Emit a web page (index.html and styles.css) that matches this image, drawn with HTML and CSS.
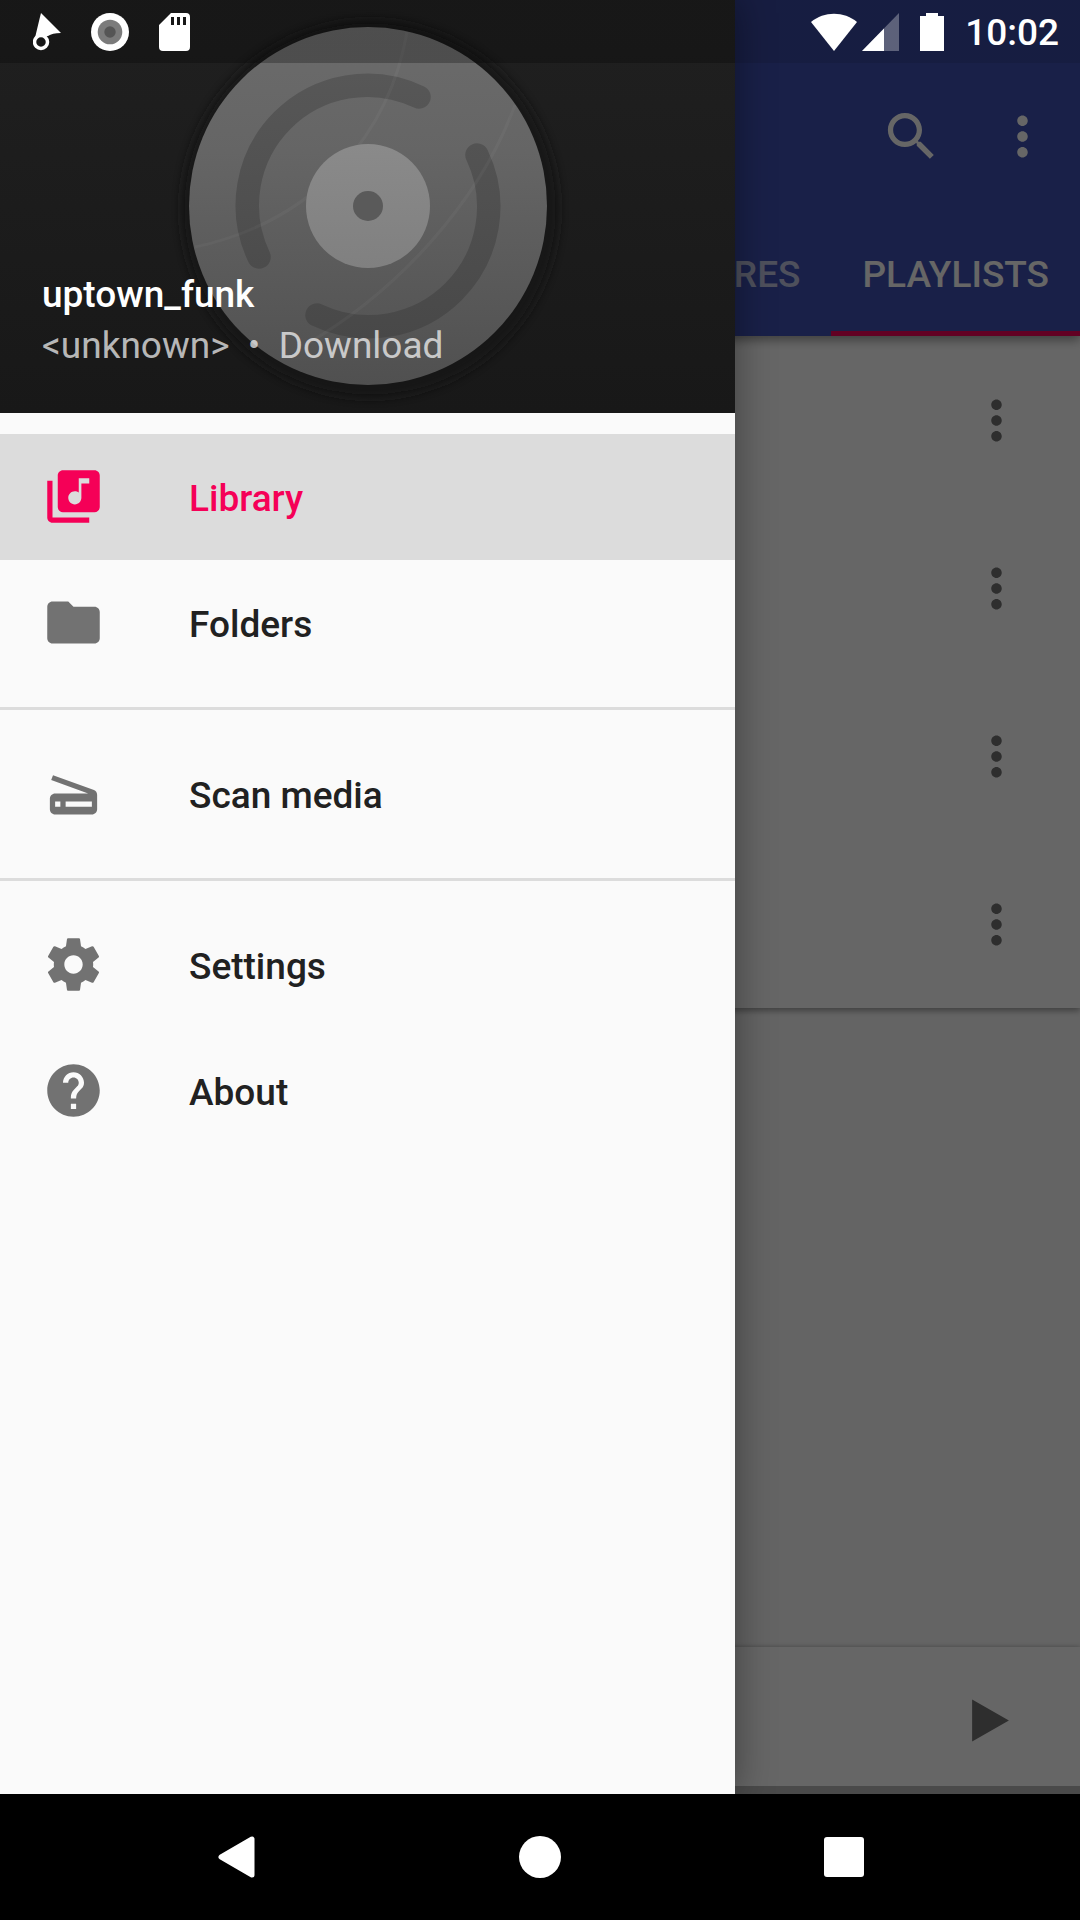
FILE: index.html
```html
<!DOCTYPE html>
<html lang="en">
<head>
<meta charset="utf-8">
<meta name="viewport" content="width=device-width, initial-scale=1">
<title>Music library</title>
<link rel="stylesheet" href="styles.css">
</head>
<body>
<svg width="0" height="0" hidden>
  <symbol id="more" viewBox="0 0 24 24"><path d="M12 8c1.100 0 2-.9 2-2s-.9-2-2-2-2 .9-2 2 .9 2 2 2zm0 2c-1.100 0-2 .9-2 2s.9 2 2 2 2-.9 2-2-.9-2-2-2zm0 6c-1.100 0-2 .9-2 2s.9 2 2 2 2-.9 2-2-.9-2-2-2z"/></symbol>
</svg>
<div class="screen">
  <div class="app">
    <header class="app-bar">
      <div class="toolbar">
        <button class="icon-button" aria-label="Search"><svg class="icon" viewBox="0 0 24 24"><path d="M15.500 14h-.790l-.280-.270C15.410 12.590 16 11.110 16 9.500 16 5.910 13.090 3 9.500 3S3 5.910 3 9.500 5.910 16 9.500 16c1.610 0 3.090-.590 4.230-1.570l.270.280v.790l5 4.990L20.490 19l-4.990-5zm-6 0C7.010 14 5 11.990 5 9.500S7.010 5 9.500 5 14 7.010 14 9.500 11.990 14 9.500 14z"/></svg></button>
        <button class="icon-button" aria-label="More options"><svg class="icon"><use href="#more"/></svg></button>
      </div>
      <nav class="tabs">
        <button class="tab">GENRES</button>
        <button class="tab tab-active">PLAYLISTS</button>
      </nav>
    </header>
    <ul class="playlists">
      <li class="playlist"><button class="icon-button" aria-label="Playlist options"><svg class="icon"><use href="#more"/></svg></button></li>
      <li class="playlist"><button class="icon-button" aria-label="Playlist options"><svg class="icon"><use href="#more"/></svg></button></li>
      <li class="playlist"><button class="icon-button" aria-label="Playlist options"><svg class="icon"><use href="#more"/></svg></button></li>
      <li class="playlist"><button class="icon-button" aria-label="Playlist options"><svg class="icon"><use href="#more"/></svg></button></li>
    </ul>
    <footer class="player">
      <button class="icon-button" aria-label="Play"><svg class="icon" viewBox="0 0 24 24"><path d="M5 4v16l14-8z"/></svg></button>
    </footer>
  </div>
  <div class="scrim"></div>

  <aside class="drawer">
    <header class="now-playing">
      <svg class="cover" viewBox="0 0 735 413" preserveAspectRatio="xMidYMid slice" aria-hidden="true">
        <defs>
          <linearGradient id="back" x1="0" y1="0" x2="0" y2="1"><stop offset="0" stop-color="#202020"/><stop offset="1" stop-color="#181818"/></linearGradient>
          <linearGradient id="disc" x1="0" y1="0" x2="0" y2="1"><stop offset="0" stop-color="#6b6b6b"/><stop offset=".35" stop-color="#656565"/><stop offset="1" stop-color="#505050"/></linearGradient>
          <linearGradient id="label" x1="0" y1="0" x2="0" y2="1"><stop offset="0" stop-color="#8a8a8a"/><stop offset="1" stop-color="#808080"/></linearGradient>
          <linearGradient id="groove" gradientUnits="userSpaceOnUse" x1="0" y1="74" x2="0" y2="338"><stop offset="0" stop-color="#575757"/><stop offset="1" stop-color="#484848"/></linearGradient>
          <filter id="soft" x="-20%" y="-20%" width="140%" height="140%"><feGaussianBlur stdDeviation="5"/></filter>
        </defs>
        <rect width="735" height="413" fill="url(#back)"/>
        <circle cx="370" cy="209" r="189" fill="#131313" opacity=".8" filter="url(#soft)"/>
        <circle cx="368" cy="206" r="179" fill="url(#disc)"/>
        <g fill="none" stroke="url(#groove)" stroke-width="23.500" stroke-linecap="round">
          <path d="M419 97A120 120 0 0 0 259 257"/>
          <path d="M477 155A120 120 0 0 1 317 315"/>
        </g>
        <g fill="none" stroke="#fff" stroke-width="3" opacity=".03">
          <path d="M407 32C390 130 320 220 195 247"/>
          <path d="M515 105C480 200 400 290 305 345"/>
        </g>
        <circle cx="368" cy="206" r="62" fill="url(#label)"/>
        <circle cx="368" cy="206" r="15" fill="#5a5a5a"/>
      </svg>
      <div class="track">
        <p class="track-title">uptown_funk</p>
        <p class="track-info">&lt;unknown&gt;&nbsp; • &nbsp;Download</p>
      </div>
    </header>
    <nav class="menu">
      <div class="menu-group">
        <a class="menu-item menu-item-current" href="#library"><svg class="icon" viewBox="0 0 24 24"><path d="M20 2H8c-1.100 0-2 .9-2 2v12c0 1.100.9 2 2 2h12c1.100 0 2-.9 2-2V4c0-1.100-.9-2-2-2zm-2 5h-3v5.500c0 1.380-1.120 2.500-2.500 2.500S10 13.880 10 12.500s1.120-2.500 2.500-2.500c.570 0 1.080.190 1.500.510V5h4v2zM4 6H2v14c0 1.100.9 2 2 2h14v-2H4V6z"/></svg><span>Library</span></a>
        <a class="menu-item" href="#folders"><svg class="icon" viewBox="0 0 24 24"><path d="M10 4H4c-1.100 0-1.990.9-1.990 2L2 18c0 1.100.9 2 2 2h16c1.100 0 2-.9 2-2V8c0-1.100-.9-2-2-2h-8l-2-2z"/></svg><span>Folders</span></a>
      </div>
      <div class="menu-group">
        <a class="menu-item" href="#scan"><svg class="icon" viewBox="0 0 24 24"><path fill-rule="evenodd" d="M19.800 10.700L4.200 5l-.7 1.900L17.600 12H5c-1.100 0-2 .9-2 2v4c0 1.100.9 2 2 2h14c1.100 0 2-.9 2-2v-5.500c0-.8-.5-1.600-1.200-1.800zM7 17H5v-2h2v2zm12 0H9v-2h10v2z"/></svg><span>Scan media</span></a>
      </div>
      <div class="menu-group">
        <a class="menu-item" href="#settings"><svg class="icon" viewBox="0 0 24 24"><path d="M19.430 12.980c.040-.320.070-.640.070-.980s-.030-.660-.070-.980l2.110-1.650c.190-.150.240-.420.120-.640l-2-3.460c-.120-.220-.390-.300-.610-.220l-2.490 1c-.520-.400-1.080-.730-1.690-.980l-.380-2.650C14.460 2.180 14.250 2 14 2h-4c-.250 0-.460.180-.490.420l-.380 2.650c-.610.250-1.170.590-1.690.980l-2.490-1c-.230-.090-.490 0-.610.220l-2 3.460c-.130.220-.070.490.120.640l2.110 1.650c-.040.320-.070.650-.070.980s.030.660.070.980l-2.110 1.650c-.190.150-.240.420-.120.640l2 3.460c.120.220.390.300.610.220l2.490-1c.520.400 1.080.730 1.690.980l.380 2.650c.030.240.240.420.490.420h4c.250 0 .460-.180.490-.420l.380-2.650c.610-.250 1.170-.590 1.690-.980l2.490 1c.230.090.490 0 .610-.220l2-3.460c.120-.220.070-.490-.120-.640l-2.110-1.650zM12 15.500c-1.930 0-3.500-1.570-3.500-3.500s1.570-3.500 3.500-3.500 3.500 1.570 3.500 3.500-1.570 3.500-3.500 3.500z"/></svg><span>Settings</span></a>
        <a class="menu-item" href="#about"><svg class="icon" viewBox="0 0 24 24"><path d="M12 2C6.480 2 2 6.480 2 12s4.480 10 10 10 10-4.480 10-10S17.520 2 12 2zm1 17h-2v-2h2v2zm2.070-7.750l-.9.920C13.450 12.900 13 13.500 13 15h-2v-.5c0-1.100.450-2.100 1.170-2.830l1.240-1.260c.370-.360.590-.860.590-1.410 0-1.100-.9-2-2-2s-2 .9-2 2H8c0-2.210 1.790-4 4-4s4 1.790 4 4c0 .880-.360 1.680-.930 2.250z"/></svg><span>About</span></a>
      </div>
    </nav>
  </aside>

  <div class="status-bar">
    <div class="status-icons">
      <svg width="28" height="38" viewBox="0 0 28 38" fill="#fff"><path d="M8 0L28 20C22 20 18 21 15 23L2 25C4 16 6 8 8 0z"/><circle cx="8" cy="29" r="6.500" fill="#171717" stroke="#fff" stroke-width="3.500"/></svg>
      <svg width="38" height="38" viewBox="0 0 38 38"><circle cx="19" cy="19" r="19" fill="#fff"/><circle cx="19" cy="19" r="12.300" fill="#7b7b7b"/><circle cx="19" cy="19" r="5.700" fill="#555"/></svg>
      <svg width="31" height="38" viewBox="0 0 31 38" fill="#fff"><path fill-rule="evenodd" d="M12 0h15q4 0 4 4v30q0 4-4 4H4q-4 0-4-4V12zM12 4v8h3V4zm6 0v8h3V4zm6 0v8h3V4z"/></svg>
    </div>
    <div class="status-system">
      <svg width="46" height="38" viewBox="0 0 46 38" fill="#fff"><path d="M0 9C13-2 33-2 46 9L23 38z"/></svg>
      <svg width="37" height="38" viewBox="0 0 37 38" fill="#fff"><path opacity=".3" d="M37 0v38H0z"/><path d="M22 15.500V38H0z"/></svg>
      <svg class="battery" width="24" height="38" viewBox="0 0 24 38" fill="#fff"><path d="M6 0h12v3h6v35H0V3h6z"/></svg>
      <time class="clock">10:02</time>
    </div>
  </div>
</div>
<nav class="system-nav">
  <button class="system-button" aria-label="Back"><svg width="42" height="42" viewBox="0 0 42 42"><path d="M37 3v36L6 21z" stroke-width="5" stroke="#fff" stroke-linejoin="round" fill="#fff"/></svg></button>
  <button class="system-button" aria-label="Home"><svg width="42" height="42" viewBox="0 0 42 42"><circle cx="21" cy="21" r="21" fill="#fff"/></svg></button>
  <button class="system-button" aria-label="Recent apps"><svg width="42" height="42" viewBox="0 0 42 42"><rect x="1" y="1" width="40" height="40" rx="3" fill="#fff"/></svg></button>
</nav>
</body>
</html>
```
FILE: styles.css
```css
* {
  box-sizing: border-box;
}

body {
  margin: 0;
  min-height: 100vh;
  display: flex;
  flex-direction: column;
  font-family: Roboto, "Noto Sans", sans-serif;
  font-size: 37px;
  line-height: 44px;
}

button {
  padding: 0;
  border: 0;
  background: none;
  color: inherit;
  font: inherit;
}

svg {
  display: block;
}

.screen {
  position: relative;
  flex: 1;
  display: flex;
  flex-direction: column;
  overflow: hidden;
}

.icon {
  width: 63px;
  height: 63px;
  fill: currentColor;
  flex: none;
}

/* Library screen behind the drawer */
.app {
  flex: 1;
  display: flex;
  flex-direction: column;
  isolation: isolate;
  background: #fafafa;
  color: #737373;
}

.app-bar {
  padding-top: 63px;
  background: #3f51b5;
  color: #fff;
  box-shadow: 0 4px 10px rgba(0, 0, 0, 0.4);
  z-index: 1;
}

.toolbar {
  height: 147px;
  padding: 0 26px;
  display: flex;
  align-items: center;
  justify-content: flex-end;
  gap: 48px;
}

.tabs {
  height: 126px;
  display: flex;
  justify-content: flex-end;
  overflow: hidden;
}

.tab {
  padding: 8px 31px 0;
  border-bottom: 5px solid transparent;
  color: rgba(255, 255, 255, 0.7);
  font-weight: 500;
}

.tab-active {
  border-color: #f50057;
  color: #fff;
}

.playlists {
  margin: 0;
  padding: 0;
  list-style: none;
  background: #fff;
  box-shadow: 0 3px 6px rgba(0, 0, 0, 0.35);
}

.playlist {
  height: 168px;
  padding: 0 52px;
  display: flex;
  align-items: center;
  justify-content: flex-end;
}

.player {
  height: 147px;
  margin-top: auto;
  padding: 8px 58px 0;
  display: flex;
  align-items: center;
  justify-content: flex-end;
  background: #fff;
  border-bottom: 8px solid #b9b9b9;
  box-shadow: 0 0 5px rgba(0, 0, 0, 0.3);
}

.scrim {
  position: absolute;
  inset: 0;
  background: rgba(0, 0, 0, 0.6);
}

/* Navigation drawer */
.drawer {
  position: absolute;
  inset: 0 auto 0 0;
  width: 735px;
  max-width: 85%;
  background: #fafafa;
  color: #212121;
  box-shadow: 0 0 36px rgba(0, 0, 0, 0.4);
}

.now-playing {
  position: relative;
  height: 413px;
  display: flex;
  align-items: flex-end;
}

.cover {
  position: absolute;
  inset: 0;
  width: 100%;
  height: 100%;
}

.track {
  position: relative;
  padding: 0 42px 45px;
  color: #fff;
}

.track-title,
.track-info {
  margin: 0;
}

.track-title {
  margin-bottom: 7px;
  font-weight: 500;
}

.track-info {
  color: rgba(255, 255, 255, 0.7);
}

.menu-group {
  padding: 21px 0;
}

.menu-group + .menu-group {
  border-top: 3px solid #dcdcdc;
}

.menu-item {
  height: 126px;
  padding: 0 42px 2px;
  display: flex;
  align-items: center;
  gap: 84px;
  font-weight: 500;
  text-decoration: none;
  color: #212121;
}

.menu-item .icon {
  color: #727272;
}

.menu-item span {
  padding-top: 6px;
}

.menu-item-current {
  background: #dcdcdc;
}

.menu-item-current,
.menu-item-current .icon {
  color: #f50057;
}

/* System bars */
.status-bar {
  position: absolute;
  inset: 0 0 auto 0;
  height: 63px;
  padding: 0 21px 0 33px;
  display: flex;
  align-items: center;
  justify-content: space-between;
  color: #fff;
  background: linear-gradient(90deg, rgba(0, 0, 0, 0.27) 735px, rgba(0, 0, 0, 0.1) 735px);
}

.status-icons {
  display: flex;
  gap: 30px;
}

.status-system {
  display: flex;
  align-items: center;
  gap: 5px;
}

.battery {
  margin: 0 16px;
}

.clock {
  padding-top: 2px;
  font-weight: 500;
}

.system-nav {
  height: 126px;
  padding: 0 84px;
  display: grid;
  grid-template-columns: repeat(3, 1fr);
  background: #000;
}

.system-button {
  display: flex;
  align-items: center;
  justify-content: center;
}
```
